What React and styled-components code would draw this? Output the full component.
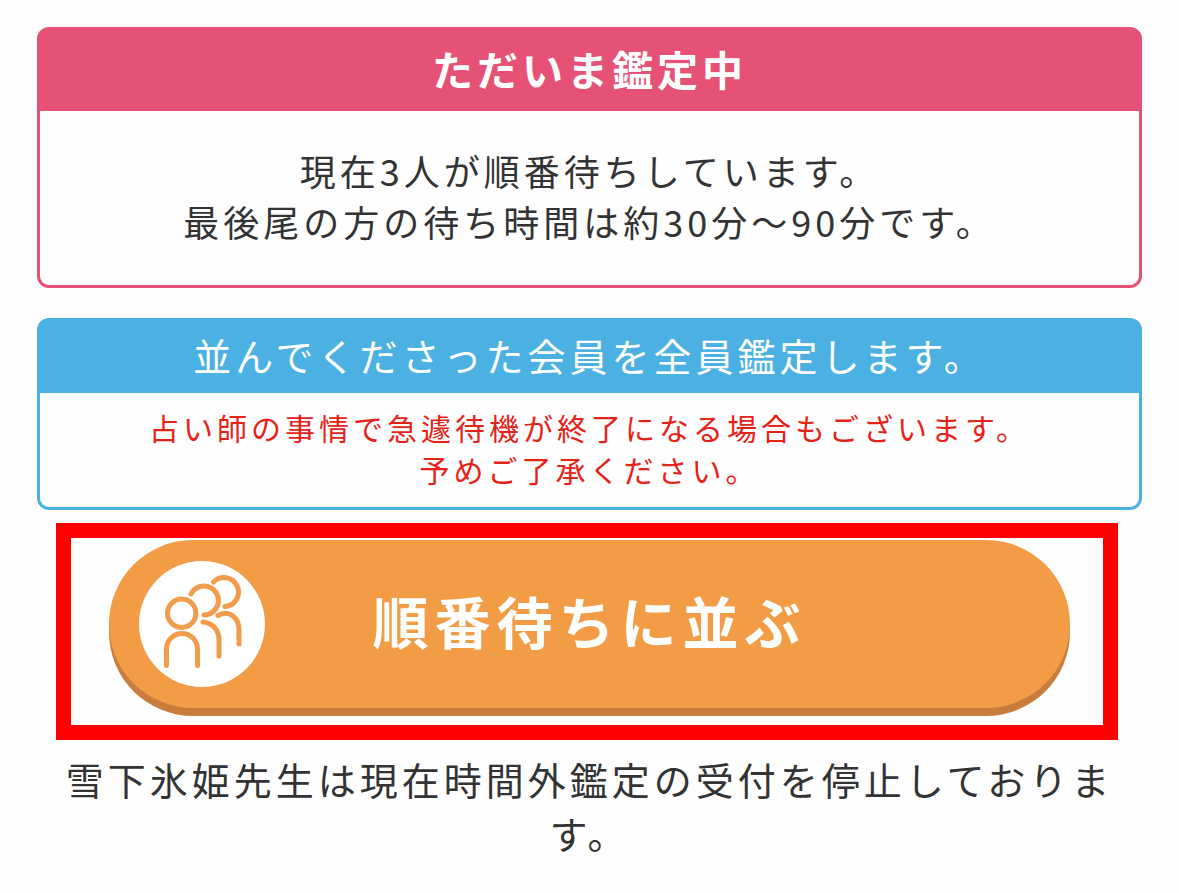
import React from "react";
import styled, { createGlobalStyle } from "styled-components";

const GlobalStyle = createGlobalStyle`
  *, *::before, *::after { box-sizing: border-box; }
  body {
    margin: 0;
    background: #fefefe;
    color: #333;
    font-family: "Noto Sans CJK JP", sans-serif;
    letter-spacing: 4px;
    text-align: center;
  }
  h2, p { margin: 0; }
`;

const Page = styled.main`
  display: flex;
  flex-direction: column;
  padding: 27px 37px 33px;
`;

const Card = styled.section`
  border: 3px solid ${(p) => p.$color};
  border-radius: 12px;
  background: ${(p) => p.$color};
  overflow: hidden;

  & + & { margin-top: 30px; }
`;

const CardTitle = styled.h2`
  padding-bottom: 4px;
  color: #fff;
  font-size: ${(p) => (p.$strong ? 41 : 38)}px;
  font-weight: ${(p) => (p.$strong ? 700 : 400)};
  line-height: ${(p) => (p.$strong ? 77 : 68)}px;
`;

const WaitingText = styled.p`
  padding: 34px 16px 38px;
  background: #fefefe;
  font-size: 36px;
  line-height: 51px;
`;

const CautionText = styled.p`
  padding: 13px 16px 17px;
  background: #fefefe;
  color: #e62218;
  font-size: 30px;
  line-height: 42px;
`;

const Highlight = styled.div`
  display: flex;
  margin: 13px 24px 0 19px;
  padding: 2px 33px 17px 38px;
  border: 15px solid #f00;
`;

const QueueButton = styled.button`
  flex: 1;
  display: grid;
  grid-template-columns: 126px 1fr 126px;
  align-items: center;
  padding: 21px 30px;
  border: 0;
  border-radius: 85px;
  background: #f29c46;
  box-shadow: 0 8px 0 #c97d3d;
  color: #fff;
  font: inherit;
  font-size: 56px;
  font-weight: 700;
  line-height: 84px;
  letter-spacing: 6px;
  cursor: pointer;
`;

const QueueLabel = styled.span`
  padding-bottom: 8px;
`;

const QueueIcon = styled.svg`
  display: block;
  width: 126px;
  height: 126px;
  border-radius: 50%;
  background: #fff;
  fill: none;
  stroke: #f09c4c;
  stroke-width: 5;
  stroke-linecap: round;
`;

const Notice = styled.p`
  margin: 12px 20px 0;
  font-size: 38px;
  line-height: 54px;
`;

export default function App() {
  return (
    <>
      <GlobalStyle />
      <Page lang="ja">
        <Card $color="#e65275">
          <CardTitle $strong>ただいま鑑定中</CardTitle>
          <WaitingText>
            現在3人が順番待ちしています。
            <br />
            最後尾の方の待ち時間は約30分〜90分です。
          </WaitingText>
        </Card>
        <Card $color="#4bb1e3">
          <CardTitle>並んでくださった会員を全員鑑定します。</CardTitle>
          <CautionText>
            占い師の事情で急遽待機が終了になる場合もございます。
            <br />
            予めご了承ください。
          </CautionText>
        </Card>
        <Highlight>
          <QueueButton type="button">
            <QueueIcon viewBox="0 0 126 126" aria-hidden="true">
              <circle cx="42.7" cy="52.3" r="14.2" />
              <path d="M27.5 104.5V88a15.5 15.5 0 0 1 31 0v16.5" />
              <path d="M52 33A14.5 14.5 0 1 1 65 54" />
              <path d="M64 61C74 62 80 69 80 79V95" />
              <path d="M74.5 21A14.5 14.5 0 1 1 86 45.5" />
              <path d="M79 54.5C90 48 100 57 100 69V83" />
            </QueueIcon>
            <QueueLabel>順番待ちに並ぶ</QueueLabel>
          </QueueButton>
        </Highlight>
        <Notice>雪下氷姫先生は現在時間外鑑定の受付を停止しております。</Notice>
      </Page>
    </>
  );
}
